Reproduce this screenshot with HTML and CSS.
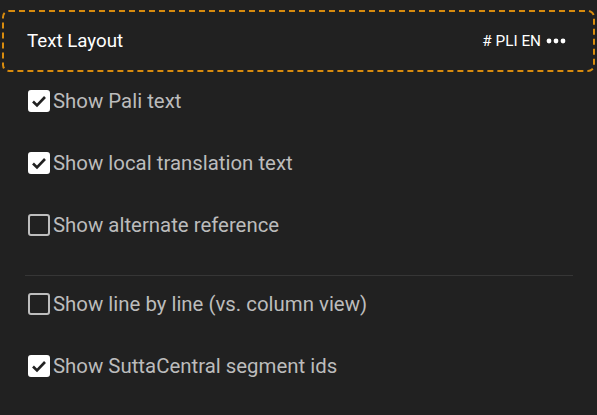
FILE: index.html
```html
<!DOCTYPE html>
<html>
<head>
<meta charset="utf-8">
<link rel="stylesheet" href="styles.css">
</head>
<body>
<div class="panel">
  <div class="header">
    <span class="title">Text Layout</span>
    <span class="summary"># PLI EN <svg class="dots" viewBox="0 0 20 6"><circle cx="3" cy="3" r="2.4" fill="#fff"/><circle cx="10" cy="3" r="2.4" fill="#fff"/><circle cx="17" cy="3" r="2.4" fill="#fff"/></svg></span>
  </div>
  <div class="options">
    <label class="opt"><span class="box checked"><svg viewBox="0 0 22 22"><path d="M5 11.5 L9 15.5 L17 7" fill="none" stroke="#212121" stroke-width="2.6"/></svg></span><span>Show Pali text</span></label>
    <label class="opt"><span class="box checked"><svg viewBox="0 0 22 22"><path d="M5 11.5 L9 15.5 L17 7" fill="none" stroke="#212121" stroke-width="2.6"/></svg></span><span>Show local translation text</span></label>
    <label class="opt"><span class="box"></span><span>Show alternate reference</span></label>
    <div class="divider"></div>
    <label class="opt"><span class="box"></span><span>Show line by line (vs. column view)</span></label>
    <label class="opt"><span class="box checked"><svg viewBox="0 0 22 22"><path d="M5 11.5 L9 15.5 L17 7" fill="none" stroke="#212121" stroke-width="2.6"/></svg></span><span>Show SuttaCentral segment ids</span></label>
  </div>
</div>
</body>
</html>
```
FILE: styles.css
```css
html, body {
  margin: 0;
  padding: 0;
  background: #212121;
}
body {
  font-family: Roboto, "Noto Sans", sans-serif;
  width: 597px;
  height: 415px;
  overflow: hidden;
}
.panel {
  padding: 10px 2px 0 2px;
}
.header {
  height: 58px;
  border: 2px dashed #d98c0e;
  border-radius: 7px;
  display: flex;
  align-items: center;
  justify-content: space-between;
  padding: 0 27px 0 23px;
  color: #ffffff;
}
.title {
  font-size: 18.7px;
}
.summary {
  font-size: 15.3px;
  display: flex;
  align-items: center;
}
.dots {
  width: 20px;
  height: 6px;
  margin-left: 5px;
}
.options {
  display: flex;
  flex-direction: column;
  padding: 17px 22px 0 26px;
}
.opt {
  display: flex;
  align-items: center;
  height: 24px;
  margin-bottom: 38px;
  color: #bcbcbc;
  font-size: 20.4px;
}
.box {
  width: 22px;
  height: 22px;
  box-sizing: border-box;
  border: 2px solid #bdbdbd;
  border-radius: 3px;
  margin-right: 3px;
  flex: none;
}
.box.checked {
  background: #ffffff;
  border-color: #ffffff;
  position: relative;
}
.box svg {
  position: absolute;
  left: -2px;
  top: -2px;
  width: 22px;
  height: 22px;
}
.divider {
  height: 1px;
  background: #363636;
  margin: 0 0 16px -3px;
}
```
